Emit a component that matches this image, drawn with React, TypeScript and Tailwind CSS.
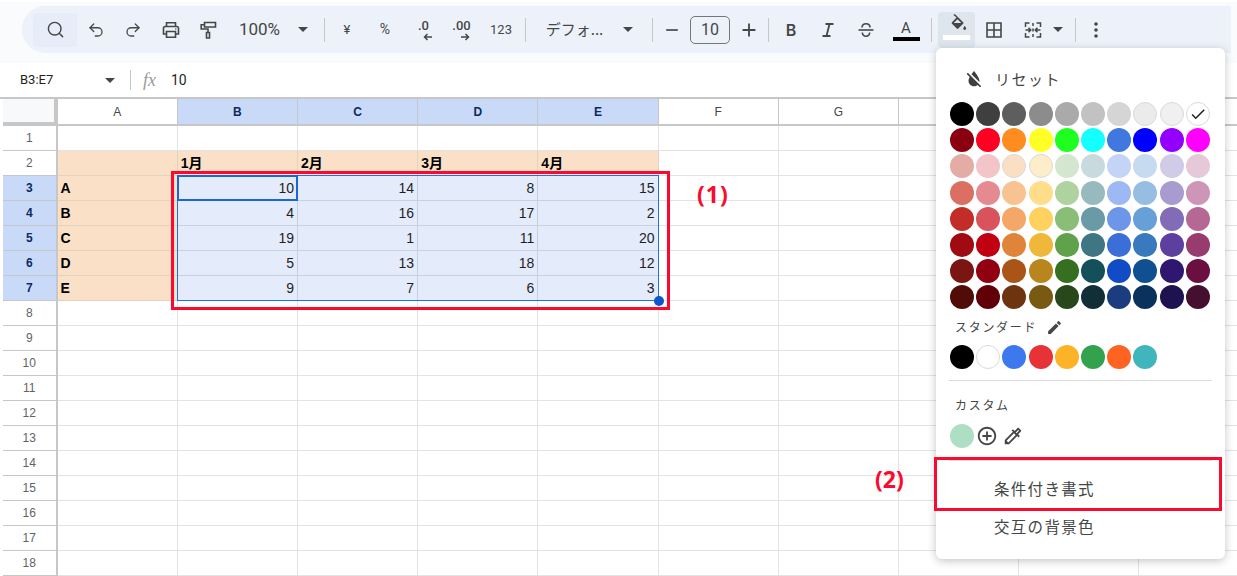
import type { ReactNode } from "react";
import {
  MdAdd,
  MdAddCircleOutline,
  MdCheck,
  MdEdit,
  MdFormatColorReset,
  MdOutlineColorize,
  MdRemove,
} from "react-icons/md";
import { Redo2, Search, Undo2 } from "lucide-react";

const jp = "font-['Noto_Sans_CJK_JP','Noto_Sans',sans-serif]";

const palette = [
  ["#000000", "#3f3f3f", "#5e5e5e", "#8c8c8c", "#aaaaaa", "#c2c2c2", "#d5d5d5", "#ebebeb", "#f0f0f0", "#ffffff"],
  ["#8a0010", "#ff0022", "#ff8c20", "#ffff26", "#1fff1f", "#14ffff", "#4078e0", "#0000ff", "#9400ff", "#ff00ff"],
  ["#e3aca5", "#f3c4c8", "#fbdfc4", "#fdedc8", "#d4e6cf", "#c9dadf", "#c3d4f6", "#c7dbf0", "#d0cbe6", "#e6c9d9"],
  ["#da6f62", "#e68a92", "#f8c291", "#ffdd8a", "#aed39e", "#97babf", "#9db8f2", "#97bde3", "#a79bd0", "#cd96b6"],
  ["#c22e27", "#da525c", "#f4a766", "#ffd25f", "#8abe76", "#6a9aa5", "#6d95e8", "#679fd8", "#826cb8", "#b56893"],
  ["#a00a12", "#c10012", "#e0843a", "#f0b83a", "#60a24c", "#3e7684", "#3a6ed8", "#3979be", "#5c3f9e", "#983c70"],
  ["#7a1512", "#900010", "#aa5418", "#b8861c", "#366f20", "#14505a", "#114cc6", "#0f4f92", "#2f1670", "#6a0f40"],
  ["#520c08", "#620008", "#6e3410", "#785a10", "#27481a", "#122f38", "#1b3d80", "#0b325c", "#1e1250", "#451030"],
];

const standard = ["#000000", "#ffffff", "#3d78ee", "#e73238", "#fdb327", "#33a24f", "#ff6322", "#40b6bc"];

const columns = ["A", "B", "C", "D", "E", "F", "G", "H", "I", "J"];
const rowNumbers = Array.from({ length: 18 }, (_, i) => i + 1);

const sheetData: Record<number, string[]> = {
  2: ["", "1月", "2月", "3月", "4月"],
  3: ["A", "10", "14", "8", "15"],
  4: ["B", "4", "16", "17", "2"],
  5: ["C", "19", "1", "11", "20"],
  6: ["D", "5", "13", "18", "12"],
  7: ["E", "9", "7", "6", "3"],
};

function Caret({ className = "" }: { className?: string }) {
  return (
    <svg width="10" height="5" viewBox="0 0 10 5" className={className}>
      <path d="M0 0h10L5 5z" fill="#444746" />
    </svg>
  );
}

function Divider() {
  return <div className="h-[24px] w-px shrink-0 bg-[#c7c7c7]" />;
}

function Btn({ className, children }: { className: string; children: ReactNode }) {
  return <div className={`flex shrink-0 items-center justify-center text-[#444746] ${className}`}>{children}</div>;
}

function Icon({ size = 20, width = 1.6, children }: { size?: number; width?: number; children: ReactNode }) {
  return (
    <svg width={size} height={size} viewBox="0 0 20 20" fill="none" stroke="#444746" strokeWidth={width}>
      {children}
    </svg>
  );
}

function DecimalIcon({ label, dir }: { label: string; dir: "left" | "right" }) {
  return (
    <div className="flex h-[24px] w-[24px] flex-col items-center text-[13px] leading-[15px] font-medium">
      <span>{label}</span>
      <svg width="10" height="8" viewBox="0 0 10 8" className={dir === "left" ? "ml-[9px]" : "ml-[7px]"}>
        {dir === "left" ? (
          <path d="M9 4H2M4.500 1 1.500 4l3 3" fill="none" stroke="#444746" strokeWidth="1.5" />
        ) : (
          <path d="M1 4h7M5.500 1l3 3-3 3" fill="none" stroke="#444746" strokeWidth="1.5" />
        )}
      </svg>
    </div>
  );
}

function Toolbar() {
  return (
    <div className="h-[61px] bg-[#f9fbfd] pt-[4px] pl-[22px] pr-[6px]">
      <div className="flex h-[47px] items-center rounded-l-[24px] bg-[#edf2fa] pl-[11px] font-['Roboto',sans-serif]">
        <Btn className="h-[34px] w-[44px] rounded-l-[4px] bg-[#e6edf8]">
          <Search size={19} strokeWidth={1.8} />
        </Btn>
        <Btn className="w-[37px]">
          <Undo2 size={18} strokeWidth={1.7} />
        </Btn>
        <Btn className="w-[38px]">
          <Redo2 size={18} strokeWidth={1.7} />
        </Btn>
        <Btn className="w-[38px]">
          <Icon>
            <path d="M5.500 6.500V2.800h9v3.700" />
            <path d="M5.500 14H2.500V8.300a1.800 1.800 0 0 1 1.800-1.800h11.400a1.800 1.800 0 0 1 1.800 1.800V14h-3" />
            <path d="M5.500 11.500h9v5.700h-9z" />
            <circle cx="14.800" cy="9" r=".7" fill="#444746" stroke="none" />
          </Icon>
        </Btn>
        <Btn className="w-[36px]">
          <Icon>
            <path d="M6.500 2.500h11v4.500h-11z" />
            <path d="M6.500 4.700H3.200v4.300h6.800v3.500" />
            <path d="M8.500 12.500h3v5.500h-3z" />
          </Icon>
        </Btn>
        <Btn className="w-[67px] text-[17px]">100%</Btn>
        <Btn className="w-[20px]">
          <Caret />
        </Btn>
        <div className="ml-[11px]">
          <Divider />
        </div>
        <Btn className="ml-[3px] w-[38px] text-[13px]">¥</Btn>
        <Btn className="w-[38px] text-[14px]">%</Btn>
        <Btn className="w-[39px]">
          <DecimalIcon label=".0" dir="left" />
        </Btn>
        <Btn className="w-[37px]">
          <DecimalIcon label=".00" dir="right" />
        </Btn>
        <Btn className="w-[42px] text-[13px]">123</Btn>
        <div className="ml-[3px]">
          <Divider />
        </div>
        <Btn className={`w-[97px] text-[15px] ${jp}`}>デフォ...</Btn>
        <Btn className="w-[10px]">
          <Caret />
        </Btn>
        <div className="ml-[19px]">
          <Divider />
        </div>
        <Btn className="w-[37px]">
          <MdRemove size={20} />
        </Btn>
        <div className="flex h-[28px] w-[40px] shrink-0 items-center justify-center rounded-[5px] border border-[#747775] text-[16px] text-[#444746]">
          10
        </div>
        <Btn className="w-[38px]">
          <MdAdd size={22} />
        </Btn>
        <Divider />
        <Btn className="w-[44px] text-[16px] font-semibold font-['Inter',sans-serif]">B</Btn>
        <Btn className="w-[30px]">
          <Icon width={1.8}>
            <path d="M7.500 4h8M4.500 16h8M11.500 4l-3 12" />
          </Icon>
        </Btn>
        <Btn className="w-[46px]">
          <Icon>
            <path d="M2.500 10h15" />
            <path d="M6 7.500c0-2.500 1.800-3.700 4-3.700s4 1.200 4 3.700" />
            <path d="M6.300 12.500c.2 2.400 1.800 3.700 3.700 3.700s3.500-1.300 3.700-3.700" />
          </Icon>
        </Btn>
        <div className="flex w-[34px] shrink-0 flex-col items-center text-[#444746]">
          <span className="text-[15px] leading-[18px]">A</span>
          <div className="h-[4px] w-[27px] bg-black" />
        </div>
        <div className="ml-[8px] mr-[6px]">
          <div className="h-[24px] w-px bg-[#c7c7c7]" />
        </div>
        <div className="flex h-[36px] w-[37px] shrink-0 flex-col items-center rounded-[4px] bg-[#dfe5ed] pt-[1px]">
          <svg width="22" height="22" viewBox="0 0 20 20">
            <path
              d="M6.800 1.800 8 .8l7.600 7.600c.4.4.4 1 0 1.400l-4.400 4.400c-.4.4-1 .4-1.400 0L5.400 9.800c-.4-.4-.4-1 0-1.400l4.200-4.200z"
              fill="#444746"
            />
            <path d="M7 9.100h6.900L10.500 5.700z" fill="#dfe5ed" />
            <path d="M17 11.500c.8 1.200 1.300 2 1.300 2.700a1.300 1.300 0 0 1-2.600 0c0-.7.500-1.500 1.300-2.700z" fill="#444746" />
          </svg>
          <div className="h-[5px] w-[27px] bg-white" />
        </div>
        <Btn className="w-[38px]">
          <Icon>
            <path d="M3 3h14v14H3zM10 3v14M3 10h14" />
          </Icon>
        </Btn>
        <Btn className="w-[38px] pl-[2px]">
          <Icon width={1.5}>
            <path d="M6.500 3H2.500v4M6.500 17H2.500v-4M13.500 3h4v4M13.500 17h4v-4" />
            <path d="M2.500 10h5M5.500 7.800 7.800 10l-2.300 2.200M17.500 10h-5M14.500 7.800 12.200 10l2.300 2.200" />
            <path d="M10 3v3M10 8.500v3M10 14v3" />
          </Icon>
        </Btn>
        <Btn className="w-[14px]">
          <Caret />
        </Btn>
        <div className="ml-[10px]">
          <Divider />
        </div>
        <Btn className="w-[39px]">
          <svg width="4" height="16" viewBox="0 0 4 16">
            <circle cx="2" cy="2" r="1.800" fill="#444746" />
            <circle cx="2" cy="8" r="1.800" fill="#444746" />
            <circle cx="2" cy="14" r="1.800" fill="#444746" />
          </svg>
        </Btn>
      </div>
    </div>
  );
}

function NameRow() {
  return (
    <div className="flex h-[34px] items-center font-['Roboto',sans-serif] text-[14px] text-[#1f1f1f]">
      <span className="ml-[20px] w-[85px] text-[13px]">B3:E7</span>
      <Caret />
      <div className="ml-[15px] h-[20px] w-px bg-[#c7c7c7]" />
      <span className="ml-[12px] w-[28px] font-['Liberation_Serif',serif] text-[18px] italic text-[#9a9a9a]">fx</span>
      <span>10</span>
    </div>
  );
}

function Sheet() {
  const cols = "grid grid-cols-[54.6px_120.2px_120.2px_120.2px_120.2px_120.2px_120.2px_120.2px_120.2px_120.2px_120.2px]";
  return (
    <div className="relative border-t-2 border-[#c7c7c7] pl-[3px] font-['Liberation_Sans',Arial,sans-serif] text-[14px] leading-[24px] text-[#1f1f1f]">
      <div className={`${cols} h-[27px]`}>
        <div className="border-r-[4px] border-b-[4px] border-[#c7c7c7] bg-[#f8f9fa]" />
        {columns.map((c) => {
          const on = c >= "B" && c <= "E";
          return (
            <div
              key={c}
              className={`flex items-center justify-center border-r border-b-2 border-[#c7c7c7] text-[12px] ${
                on ? "bg-[#c9daf8] font-bold text-[#0b2a5e]" : "text-[#444746]"
              }`}
            >
              {c}
            </div>
          );
        })}
      </div>
      {rowNumbers.map((r) => {
        const rowOn = r >= 3 && r <= 7;
        const data = sheetData[r];
        return (
          <div key={r} className={`${cols} h-[25px]`}>
            <div
              className={`flex items-center justify-center border-r-[2px] border-b border-[#c7c7c7] text-[12px] ${
                rowOn ? "bg-[#c9daf8] font-bold text-[#0b2a5e]" : "text-[#5f6368]"
              }`}
            >
              {r}
            </div>
            {columns.map((c, i) => {
              const text = data?.[i] ?? "";
              const orange = (r === 2 && i <= 4) || (rowOn && i === 0);
              const picked = rowOn && i >= 1 && i <= 4;
              const tone = orange
                ? "bg-[#fbe0c8] border-[#e4d2c0] font-bold text-black"
                : picked
                  ? "bg-[#e4ebfb] border-[#c9d0de] text-right"
                  : "border-[#e2e3e3]";
              return (
                <div key={c} className={`truncate border-r border-b px-[3px] ${tone}`}>
                  {r === 2 ? <span className="font-['Liberation_Sans','Noto_Sans_CJK_JP',sans-serif]">{text}</span> : text}
                </div>
              );
            })}
          </div>
        );
      })}

      {/* selection overlay */}
      <div className="absolute left-[177px] top-[76px] h-[126px] w-[482px] border border-[#1a73e8]" />
      <div className="absolute left-[177px] top-[76px] h-[26px] w-[121px] border-2 border-[#1a66d6]" />
      <div className="absolute left-[654px] top-[197px] h-[10px] w-[10px] rounded-full bg-[#1155cc]" />
    </div>
  );
}

function Swatch({ color }: { color: string }) {
  const light = ["#ebebeb", "#f0f0f0", "#ffffff", "#fbdfc4", "#fdedc8"].includes(color);
  return (
    <div
      className={`h-[24px] w-[24px] rounded-full ${light ? "border border-[#dadada]" : ""}`}
      style={{ backgroundColor: color }}
    />
  );
}

function ColorMenu() {
  return (
    <div
      className={`absolute left-[936px] top-[48px] h-[511px] w-[289px] rounded-[6px] bg-white shadow-[0_2px_8px_rgba(60,64,67,0.3)] ${jp} text-[#444746]`}
    >
      <div className="flex h-[54px] items-center pl-[27px] pt-[8px]">
        <MdFormatColorReset size={22} className="text-[#3c4043]" />
        <span className="ml-[10px] text-[15px] tracking-[1.500px]">リセット</span>
      </div>
      <div className="ml-[14px] grid w-[259.8px] grid-cols-10 gap-[2.2px]">
        {palette.map((row, i) =>
          row.map((color, j) => (
            <div key={`${i}-${j}`} className="relative">
              <Swatch color={color} />
              {i === 0 && j === 9 && (
                <MdCheck size={18} className="absolute left-[3px] top-[3px] text-[#202124]" />
              )}
            </div>
          )),
        )}
      </div>
      <div className="ml-[19px] mt-[6px] flex h-[24px] items-center text-[12px] tracking-[1.700px]">
        スタンダード
        <MdEdit size={17} className="ml-[9px] text-[#444746]" />
      </div>
      <div className="ml-[14px] mt-[6px] flex gap-[2.2px]">
        {standard.map((color) => (
          <Swatch key={color} color={color} />
        ))}
      </div>
      <div className="mx-[13px] mt-[11px] h-px bg-[#dadce0]" />
      <div className="ml-[19px] mt-[15px] h-[18px] text-[12px] leading-[18px] tracking-[1.700px]">カスタム</div>
      <div className="ml-[14px] mt-[10px] flex items-center">
        <Swatch color="#aedfc4" />
        <MdAddCircleOutline size={22} className="ml-[2px] text-[#444746]" />
        <MdOutlineColorize size={22} className="ml-[4px] text-[#444746]" />
      </div>
      <div className="mx-[13px] mt-[12px] h-px bg-[#dadce0]" />
      <div className="ml-[58px] mt-[15px] text-[15.5px] leading-[24px] tracking-[1.3px]">条件付き書式</div>
      <div className="ml-[58px] mt-[14px] text-[15.5px] leading-[24px] tracking-[1.3px]">交互の背景色</div>
    </div>
  );
}

export default function App() {
  return (
    <div className="relative h-[576px] w-[1237px] overflow-hidden bg-white pt-[2px]">
      <Toolbar />
      <NameRow />
      <Sheet />
      <ColorMenu />

      {/* annotations */}
      <div className="absolute left-[171px] top-[171px] h-[139px] w-[499px] border-[3px] border-[#fa0a2e]" />
      <div className="absolute left-[934px] top-[457px] h-[54px] w-[288px] border-[3px] border-[#fa0a2e]" />
      <span className="absolute left-[697px] top-[179px] font-['Open_Sans',sans-serif] text-[23px] font-bold leading-[30px] tracking-[1px] text-[#fa0a2e]">
        (1)
      </span>
      <span className="absolute left-[875px] top-[464px] font-['Open_Sans',sans-serif] text-[23px] font-bold leading-[30px] text-[#fa0a2e]">
        (2)
      </span>
    </div>
  );
}
